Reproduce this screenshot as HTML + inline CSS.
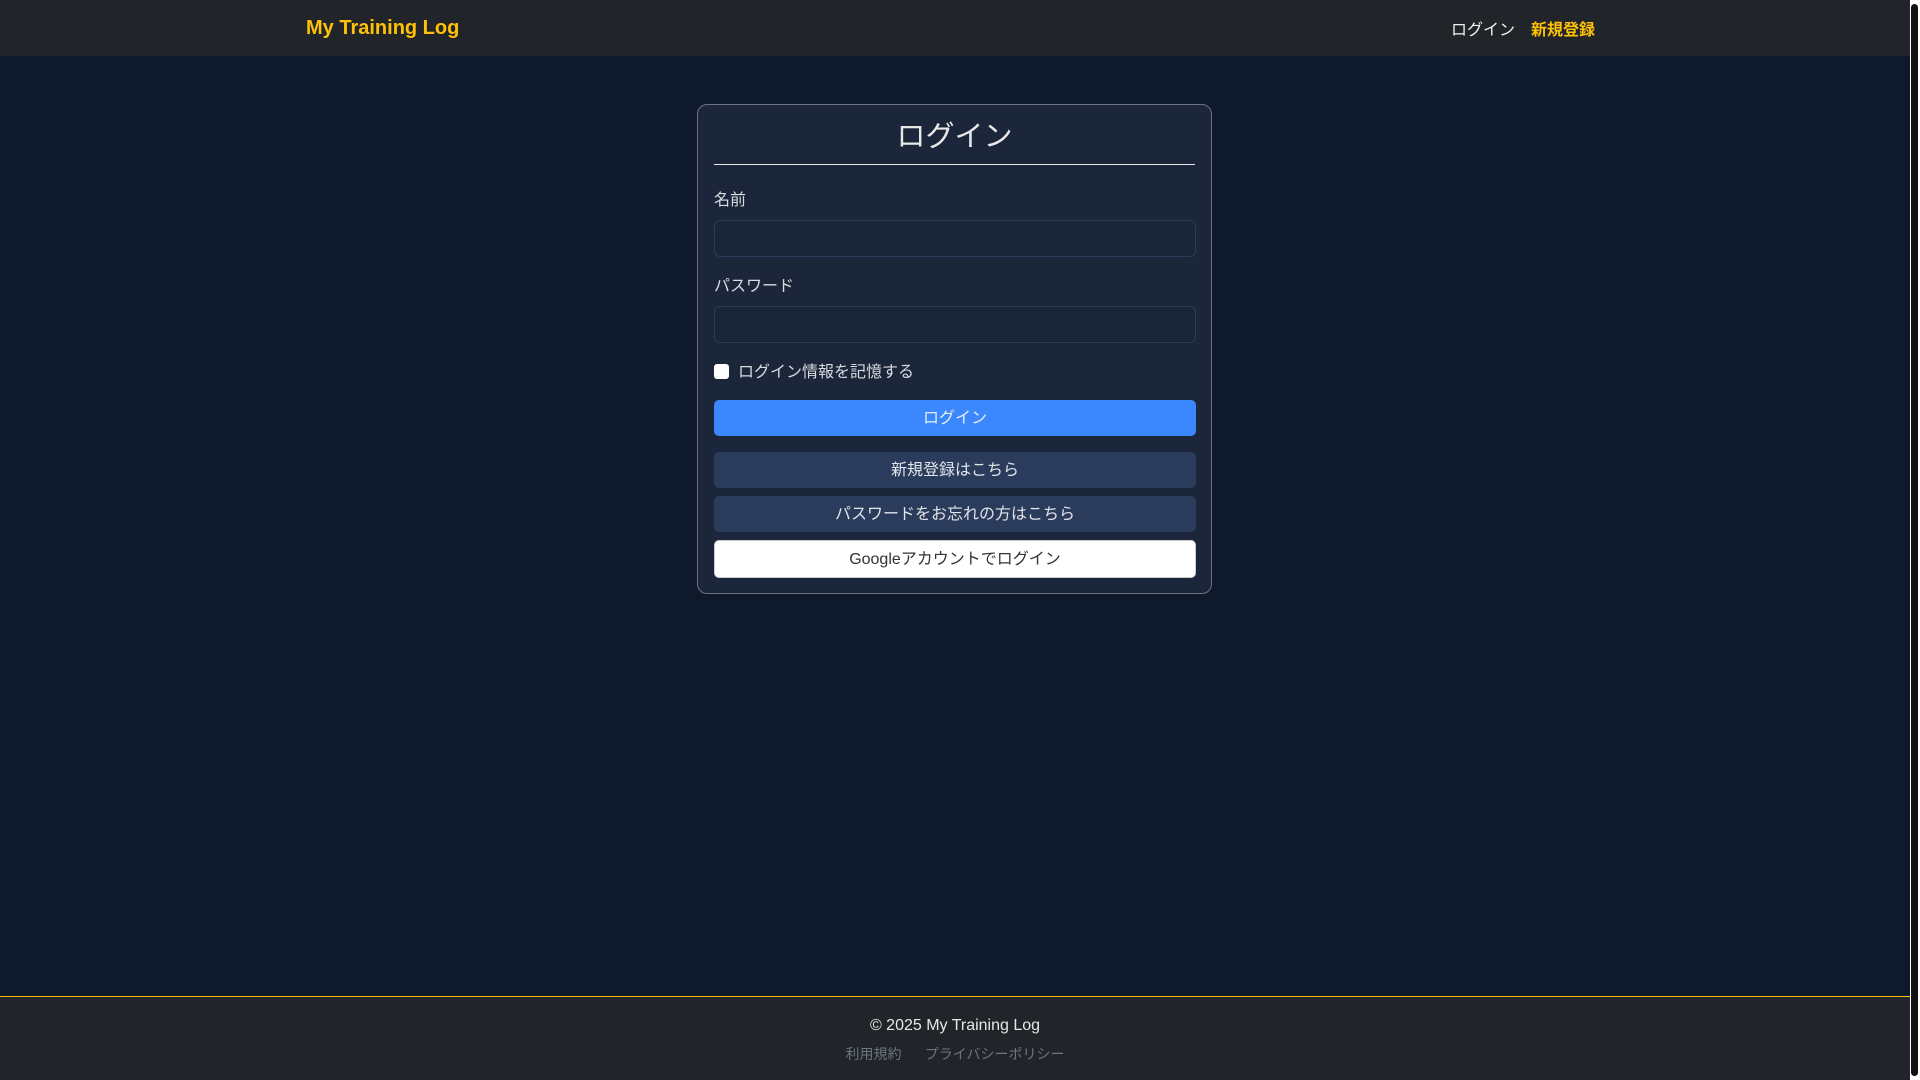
<!DOCTYPE html>
<html><head><meta charset="utf-8"><style>
*{box-sizing:border-box;margin:0;padding:0}
html,body{width:1920px;height:1080px;overflow:hidden}
body{background:#0e1a2b;font-family:"Liberation Sans","Noto Sans CJK JP",sans-serif;color:#e5e7eb;position:relative}
.sb{position:absolute;left:1910px;top:0;width:10px;height:1080px;background:#fff}
.sb div{position:absolute;left:1px;top:4px;width:7px;height:1072px;background:#111;border-radius:4px}
.nav{position:absolute;left:0;top:0;width:1910px;height:56px;background:#212529}
.brand{position:absolute;left:306px;top:17px;font-size:20px;font-weight:bold;color:#ffc107}
.n1{position:absolute;left:1451px;top:16px;font-size:16px;color:#f1f1f1}
.n2{position:absolute;left:1531px;top:16px;font-size:16px;color:#ffc107;font-weight:bold}
.card{position:absolute;left:697px;top:104px;width:515px;height:490px;background:#1c263a;border:1px solid #6b7280;border-radius:10px}
.title{position:absolute;left:0;width:100%;top:8px;text-align:center;font-size:29px;color:#e8e8e8}
.rule{position:absolute;left:16px;right:16px;top:59px;height:1px;background:#e5e7eb}
.lbl{position:absolute;left:16px;font-size:16px;color:#d8dbe0}
.inp{position:absolute;left:16px;width:482px;height:37px;background:#1b2539;border:1px solid #2b3a5a;border-radius:6px}
.cb{position:absolute;left:16px;top:259px;width:15px;height:15px;background:#fff;border-radius:3px}
.cbl{position:absolute;left:40px;top:253px;font-size:16px;color:#d8dbe0}
.btn{position:absolute;left:16px;width:482px;height:36px;border-radius:5px;text-align:center;line-height:38px;font-size:16px}
.foot{position:absolute;left:0;top:996px;width:1910px;height:84px;background:#212529;border-top:1px solid #ffc107;text-align:center}
.f1{position:absolute;left:0;width:100%;top:20px;font-size:16px;color:#e5e7eb}
.f2{position:absolute;left:0;width:100%;top:47px;font-size:14px;color:#6c757d}
</style></head><body>
<div class="nav"><div class="brand">My Training Log</div><div class="n1">ログイン</div><div class="n2">新規登録</div></div>
<div class="card">
<div class="title">ログイン</div><div class="rule"></div>
<div class="lbl" style="top:81px">名前</div>
<div class="inp" style="top:115px"></div>
<div class="lbl" style="top:167px">パスワード</div>
<div class="inp" style="top:201px"></div>
<div class="cb"></div><div class="cbl">ログイン情報を記憶する</div>
<div class="btn" style="top:295px;background:#3b87fd;color:#e6eefc">ログイン</div>
<div class="btn" style="top:347px;background:#2a3b5b;color:#e1e4ea">新規登録はこちら</div>
<div class="btn" style="top:391px;background:#2a3b5b;color:#e1e4ea">パスワードをお忘れの方はこちら</div>
<div class="btn" style="top:435px;height:38px;line-height:38px;background:#fff;color:#333;border:1px solid #ccc">Googleアカウントでログイン</div>
</div>
<div class="foot"><div class="f1">© 2025 My Training Log</div><div class="f2">利用規約&nbsp;&nbsp;&nbsp;&nbsp;&nbsp;&nbsp;プライバシーポリシー</div></div>
<div class="sb"><div></div></div>
</body></html>
